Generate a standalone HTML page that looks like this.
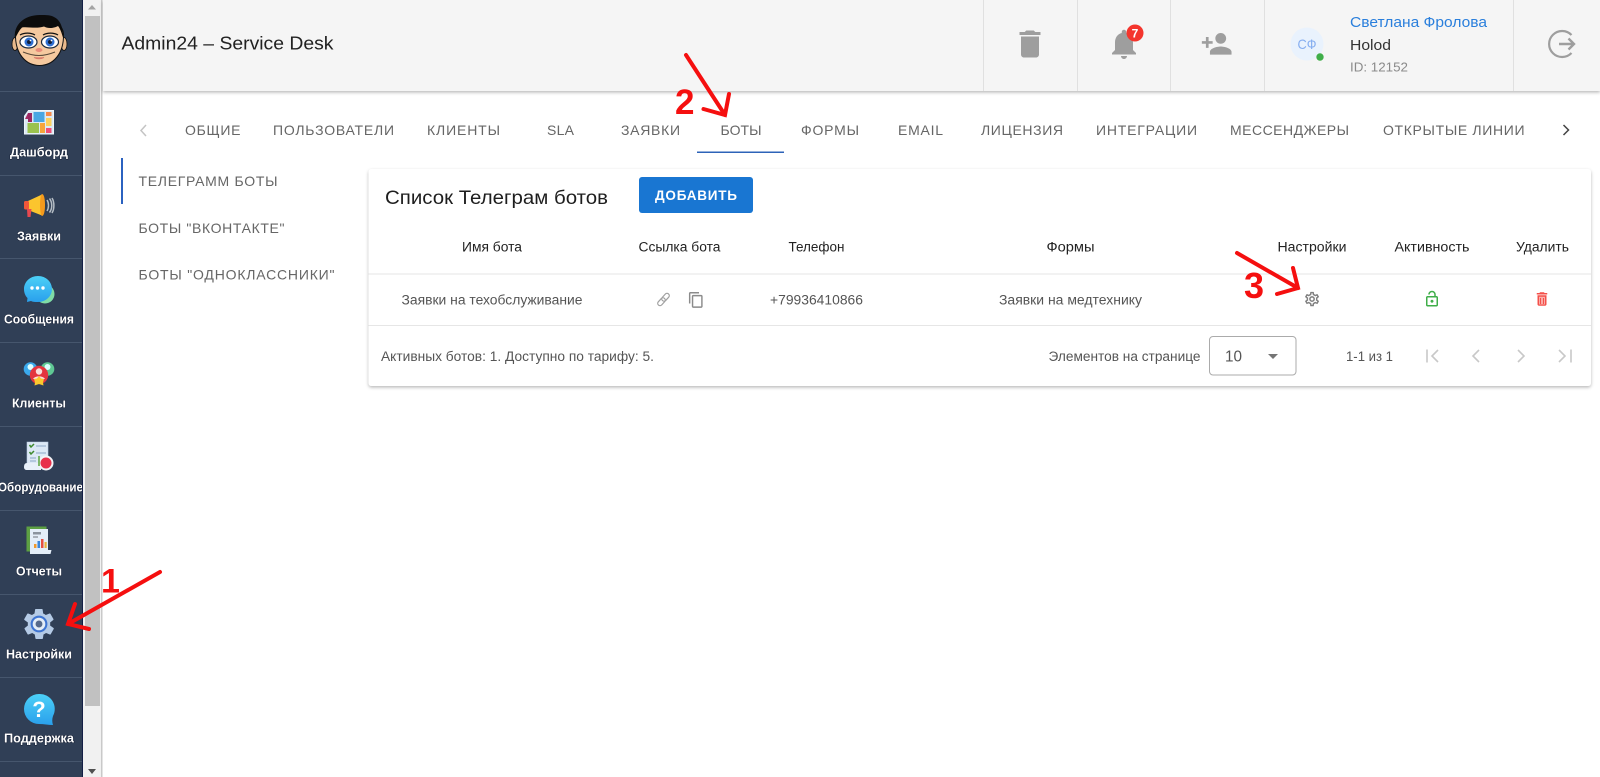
<!DOCTYPE html>
<html lang="ru"><head><meta charset="utf-8"><title>Admin24 – Service Desk</title>
<style>
html,body{margin:0;padding:0;width:1600px;height:777px;overflow:hidden;background:#fff}
svg{display:block}
text{font-family:"Liberation Sans",sans-serif}
.tab{font-size:14px;fill:#666}
.th{font-size:13.5px;fill:#222}
.td{font-size:13.5px;fill:#555}
.nav{font-size:13px;font-weight:bold;fill:#fff;paint-order:stroke;stroke:#141e33;stroke-width:1px}
.thin{fill:none;stroke:#c8c8c8;stroke-width:1.6}
.red{fill:none;stroke:#f50f0f;stroke-width:4;stroke-linecap:round;stroke-linejoin:miter}
.num{font-weight:bold;fill:#f50f0f}
</style></head><body>
<svg width="1600" height="777" viewBox="0 0 1600 777" xmlns="http://www.w3.org/2000/svg">
<defs>
<filter id="sh" x="-2%" y="-10%" width="104%" height="120%"><feDropShadow dx="0" dy="1.5" stdDeviation="1.6" flood-color="#000" flood-opacity=".28"/></filter>
<linearGradient id="bl" x1="0" y1="0" x2="0" y2="1"><stop offset="0" stop-color="#4cd0f7"/><stop offset="1" stop-color="#2aa0ec"/></linearGradient>
</defs>
<rect width="1600" height="777" fill="#fff"/>

<!-- sidebar -->
<rect x="0" y="0" width="82" height="777" fill="#303f56"/>
<rect x="82" y="0" width="1" height="777" fill="#141f45"/>
<g fill="#46566d">
<rect y="91" width="82" height="1"/><rect y="175" width="82" height="1"/><rect y="258" width="82" height="1"/><rect y="342" width="82" height="1"/>
<rect y="426" width="82" height="1"/><rect y="510" width="82" height="1"/><rect y="594" width="82" height="1"/><rect y="677" width="82" height="1"/><rect y="761" width="82" height="1"/>
</g>
<!-- scrollbar -->
<rect x="83" y="0" width="18" height="777" fill="#f1f1f1"/>
<rect x="85" y="16" width="15" height="690" fill="#c1c1c1"/>
<path d="M88 9.500l4-4.500 4 4.500z" fill="#a3a3a3"/>
<path d="M88 769l4 5 4-5z" fill="#505050"/>
<rect x="101" y="0" width="1.500" height="777" fill="#c9c9c9"/>

<!-- avatar -->
<g>
<ellipse cx="15" cy="44" rx="3" ry="6.500" fill="#e9b98c" stroke="#111" stroke-width=".8"/>
<ellipse cx="64" cy="44" rx="3" ry="6.500" fill="#e9b98c" stroke="#111" stroke-width=".8"/>
<path d="M15.500 34C15 54 26 65.500 39.500 65.500S64 54 63.500 34C63 24 52 19 39.500 19S16 24 15.500 34z" fill="#f5c99f" stroke="#111" stroke-width="1"/>
<path d="M15 39C13 25 24 15 40 15c6 0 11 0 14 2 6 3 9 9 9.500 22-2-6-3-10-5.500-13-3 2-10 3-14 .5-7 2.500-17 0-22 1-3 3-5 7-7 11.500z" fill="#0c0c0c"/>
<ellipse cx="28.500" cy="42" rx="8.500" ry="6" fill="#fff" stroke="#1b2a3e" stroke-width="1.200"/>
<ellipse cx="50" cy="42" rx="8.500" ry="6" fill="#fff" stroke="#1b2a3e" stroke-width="1.200"/>
<circle cx="29" cy="42" r="4.500" fill="#2f6fd2"/><circle cx="50" cy="42" r="4.500" fill="#2f6fd2"/>
<circle cx="29" cy="42" r="2" fill="#10203d"/><circle cx="50" cy="42" r="2" fill="#10203d"/>
<circle cx="30.500" cy="40.500" r=".9" fill="#fff"/><circle cx="51.500" cy="40.500" r=".9" fill="#fff"/>
<path d="M20 35c4-2.500 11-2.500 15 0M43 35c4-2.500 11-2.500 15 0" stroke="#111" stroke-width="1.300" fill="none"/>
<ellipse cx="39" cy="50" rx="3.500" ry="2" fill="#e98c7a"/>
<path d="M23 52c5 2 11 3.500 16 3.500s11-1.500 16-3.500" stroke="#5a4a3a" stroke-width="1" fill="none"/>
<path d="M34 57.500c3 1.800 7 1.800 10 0-3 .3-7 .3-10 0z" fill="#d97b6b" stroke="#d97b6b" stroke-width=".8"/>
</g>

<!-- dashboard icon -->
<g>
<path d="M24.500 116l4-5.500h25v23.500h-29z" fill="#dbe9f4" stroke="#eef5fb" stroke-width="1"/>
<path d="M28 113v6h-3z" fill="#a32c64"/><rect x="28" y="113" width="4" height="9" fill="#9b2660"/>
<rect x="33.500" y="112" width="11" height="10" fill="#49a6e3"/><rect x="46" y="112" width="5.500" height="4" fill="#f6894a"/>
<rect x="46" y="118" width="5.500" height="8" fill="#fbd15e"/><rect x="27.500" y="123" width="11.500" height="10" fill="#9bc24e"/>
<rect x="40" y="123" width="5" height="10" fill="#f6a53c"/><rect x="46" y="128" width="5.500" height="5" fill="#f04f77"/>
</g>
<!-- megaphone -->
<g>
<path d="M28 201l14-6.500v21L28 210z" fill="#fbc52e"/><path d="M42 194c2 0 3 5 3 11s-1 11-3 11c-1 0-2-5-2-11s1-11 2-11z" fill="#f59a1d"/>
<rect x="24" y="201" width="5" height="8.500" rx="1.500" fill="#f0573a"/>
<path d="M27 209h4.500l-1 8h-3z" fill="#e8484f"/>
<path d="M47 200c2 3 2 8 0 11M49.500 198.500c3 4 3 10 0 14M52 198c2.500 4 2.500 11 0 15" stroke="#b4bcc4" stroke-width="1.500" fill="none"/>
</g>
<!-- chat -->
<g>
<circle cx="45" cy="294" r="9.500" fill="#7fdca6"/>
<path d="M38 276c8 0 14 6 14 13s-6 13-14 13c-3 0-5 0-7-1l-4 1 .5-4c-2-2-3.500-5-3.500-9 0-7 6-13 14-13z" fill="url(#bl)"/>
<circle cx="32" cy="288" r="1.700" fill="#fff"/><circle cx="37.500" cy="288" r="1.700" fill="#fff"/><circle cx="43" cy="288" r="1.700" fill="#fff"/>
</g>
<!-- clients -->
<g>
<circle cx="30.500" cy="369" r="6.800" fill="#3aa9ec"/><circle cx="47.500" cy="369" r="6.800" fill="#5fc894"/>
<circle cx="30.500" cy="367" r="3" fill="#dff"/><circle cx="47.500" cy="367" r="3" fill="#dff"/>
<circle cx="39" cy="375" r="9.200" fill="#e3353f"/><circle cx="39" cy="371.500" r="3.200" fill="#f9dede"/>
<path d="M33 379c2-3.500 10-3.500 12 0" fill="#f9dede"/>
<path d="M39 376l2 2.500 3 .5-1 3.500 .5 3-4.500-1.500-4.500 1.500 .5-3-1-3.500 3-.5z" fill="#fbc92e"/>
</g>
<!-- equipment -->
<g>
<path d="M27 442h21v25H27z" fill="#dde9f6" stroke="#b7cbe2" stroke-width=".6"/>
<path d="M24 467c0-2.500 1-4 3-4h14v7H27c-2 0-3-1-3-3z" fill="#e9f1fa"/>
<path d="M29.500 445l1.500 2 3-3M29.500 452l1.500 2 3-3" stroke="#3f8a2f" stroke-width="1.500" fill="none"/>
<path d="M36 446h10M36 453h10M30 458h6M30 461h6" stroke="#8aa7c6" stroke-width="1"/>
<circle cx="46" cy="463" r="7.500" fill="#f2f3f6"/><circle cx="46" cy="463" r="5.500" fill="#e8304a"/>
<path d="M39 456v10" stroke="#5ca53e" stroke-width="1.500"/>
</g>
<!-- reports -->
<g>
<rect x="26.500" y="526.500" width="20" height="25" fill="#5da043"/>
<path d="M30 529h18v21h3.500l-1 4H30z" fill="#e4eef8"/>
<rect x="33" y="532" width="8" height="2.500" fill="#8b949e"/><rect x="33" y="536" width="5" height="2" fill="#a9b1ba"/>
<rect x="34" y="544" width="2.500" height="4" fill="#f39a2b"/><rect x="37.500" y="541" width="2.500" height="7" fill="#3d87d8"/><rect x="41" y="539" width="2.500" height="9" fill="#e65040"/><rect x="44.500" y="542" width="2.200" height="6" fill="#e8b23a"/>
</g>
<!-- settings -->
<g transform="translate(21,606) scale(1.500)">
<path d="M19.400 13a7.500 7.500 0 0 0 0-2l2.100-1.700c.2-.1.2-.4.1-.6l-2-3.500c-.1-.2-.4-.3-.6-.2l-2.500 1a7.300 7.300 0 0 0-1.700-1l-.4-2.600c0-.2-.2-.4-.5-.4h-4c-.2 0-.5.200-.5.400l-.4 2.600c-.6.300-1.100.600-1.700 1l-2.500-1c-.2-.1-.5 0-.6.200l-2 3.500c-.1.200-.1.500.1.600L4.600 11a7.500 7.500 0 0 0 0 2l-2.100 1.700c-.2.100-.2.400-.1.600l2 3.500c.1.200.4.300.6.200l2.500-1c.5.400 1.100.700 1.700 1l.4 2.600c0 .2.300.4.500.4h4c.3 0 .5-.2.500-.4l.4-2.600c.6-.3 1.200-.6 1.700-1l2.500 1c.2.100.5 0 .6-.2l2-3.500c.1-.2.100-.5-.1-.6z" fill="#b5cbe6"/>
<circle cx="12" cy="12" r="5.600" fill="#3f75d2"/><circle cx="12" cy="12" r="4.200" fill="#e3ecf6"/><circle cx="12" cy="12" r="2.300" fill="#56698a"/>
</g>
<!-- help -->
<path d="M39 694a15 15 0 1 0 0 30c5 0 9 1 14 1-1-3-1-6 0-9a15 15 0 0 0-14-22z" fill="url(#bl)"/>
<text x="39" y="717" text-anchor="middle" font-size="22" font-weight="bold" fill="#fff">?</text>

<text class="nav" x="10" y="156.500" textLength="58" lengthAdjust="spacingAndGlyphs">Дашборд</text>
<text class="nav" x="17" y="240.500" textLength="44" lengthAdjust="spacingAndGlyphs">Заявки</text>
<text class="nav" x="4" y="323.500" textLength="70" lengthAdjust="spacingAndGlyphs">Сообщения</text>
<text class="nav" x="12" y="407.500" textLength="54" lengthAdjust="spacingAndGlyphs">Клиенты</text>
<svg x="0" y="470" width="82" height="30"><text class="nav" x="-2" y="21.500" textLength="85" lengthAdjust="spacingAndGlyphs">Оборудование</text></svg>
<text class="nav" x="16" y="575.500" textLength="46" lengthAdjust="spacingAndGlyphs">Отчеты</text>
<text class="nav" x="6" y="658.500" textLength="66" lengthAdjust="spacingAndGlyphs">Настройки</text>
<text class="nav" x="4" y="742.500" textLength="70" lengthAdjust="spacingAndGlyphs">Поддержка</text>

<!-- header -->
<rect x="103" y="0" width="1497" height="91" fill="#f5f5f5" filter="url(#sh)"/>
<g fill="#e0e0e0"><rect x="983" y="0" width="1" height="91"/><rect x="1077" y="0" width="1" height="91"/><rect x="1170" y="0" width="1" height="91"/><rect x="1264" y="0" width="1" height="91"/><rect x="1513" y="0" width="1" height="91"/></g>
<text x="121.500" y="49.500" font-size="18" fill="#222" textLength="212" lengthAdjust="spacingAndGlyphs">Admin24 – Service Desk</text>
<path transform="translate(1012,26) scale(1.500)" d="M6 19c0 1.100.9 2 2 2h8c1.100 0 2-.9 2-2V7H6v12zM19 4h-3.500l-1-1h-5l-1 1H5v2h14V4z" fill="#9e9e9e"/>
<path transform="translate(1106,26) scale(1.500)" d="M12 22c1.100 0 2-.9 2-2h-4c0 1.100.89 2 2 2zm6-6v-5c0-3.070-1.640-5.640-4.500-6.320V4c0-.83-.67-1.500-1.500-1.500s-1.500.67-1.500 1.500v.68C7.630 5.360 6 7.920 6 11v5l-2 2v1h16v-1l-2-2z" fill="#9e9e9e"/>
<circle cx="1135" cy="33" r="8.500" fill="#f4352d"/>
<text x="1135" y="37.500" font-size="12" font-weight="bold" fill="#fff" text-anchor="middle">7</text>
<path transform="translate(1200.500,27.600) scale(1.350)" d="M15 12c2.210 0 4-1.790 4-4s-1.790-4-4-4-4 1.790-4 4 1.790 4 4 4zm-9-2V7H4v3H1v2h3v3h2v-3h3v-2H6zm9 4c-2.670 0-8 1.340-8 4v2h16v-2c0-2.660-5.330-4-8-4z" fill="#9e9e9e"/>
<circle cx="1307" cy="44" r="16.500" fill="#e9f2fd"/>
<text x="1307" y="49" font-size="14" fill="#86aef0" text-anchor="middle" textLength="19" lengthAdjust="spacingAndGlyphs">СФ</text>
<circle cx="1320" cy="57" r="3.700" fill="#3fae49"/>
<text x="1350" y="27" font-size="14.500" fill="#2a7fdc" textLength="137" lengthAdjust="spacingAndGlyphs">Светлана Фролова</text>
<text x="1350" y="50" font-size="14.500" fill="#333" textLength="41" lengthAdjust="spacingAndGlyphs">Holod</text>
<text x="1350" y="71.500" font-size="12.500" fill="#8a8a8a" textLength="58" lengthAdjust="spacingAndGlyphs">ID: 12152</text>
<path d="M1571.500 35a13 13 0 1 0 0 18" fill="none" stroke="#9e9e9e" stroke-width="2.200"/>
<path d="M1559 44h15M1568.500 38.500l5.500 5.500-5.500 5.500" fill="none" stroke="#9e9e9e" stroke-width="2.400"/>

<!-- tabs -->
<path d="M146 125l-5 5.500 5 5.500" fill="none" stroke="#c4c4c4" stroke-width="1.500"/>
<text class="tab" x="185" y="135" textLength="55.500">ОБЩИЕ</text>
<text class="tab" x="273" y="135" textLength="121">ПОЛЬЗОВАТЕЛИ</text>
<text class="tab" x="427" y="135" textLength="73">КЛИЕНТЫ</text>
<text class="tab" x="547" y="135" textLength="27">SLA</text>
<text class="tab" x="621" y="135" textLength="59">ЗАЯВКИ</text>
<text class="tab" x="720.500" y="135" textLength="41">БОТЫ</text>
<text class="tab" x="801" y="135" textLength="58">ФОРМЫ</text>
<text class="tab" x="898" y="135" textLength="45">EMAIL</text>
<text class="tab" x="981" y="135" textLength="82">ЛИЦЕНЗИЯ</text>
<text class="tab" x="1096" y="135" textLength="101">ИНТЕГРАЦИИ</text>
<text class="tab" x="1230" y="135" textLength="119">МЕССЕНДЖЕРЫ</text>
<text class="tab" x="1383" y="135" textLength="141.500">ОТКРЫТЫЕ ЛИНИИ</text>
<path d="M1563.500 125l5 5-5 5" fill="none" stroke="#444" stroke-width="1.500"/>
<rect x="697" y="151.500" width="87" height="1.500" fill="#2d63b8"/>

<!-- left menu -->
<rect x="121" y="158" width="2" height="46" fill="#2b62c0"/>
<text class="tab" x="138.500" y="186" textLength="139">ТЕЛЕГРАММ БОТЫ</text>
<text class="tab" x="138.500" y="233" textLength="146">БОТЫ "ВКОНТАКТЕ"</text>
<text class="tab" x="138.500" y="279.500" textLength="196">БОТЫ "ОДНОКЛАССНИКИ"</text>

<!-- card -->
<rect x="368.500" y="169" width="1222.500" height="217" rx="3" fill="#fff" filter="url(#sh)"/>
<text x="385" y="204" font-size="19.500" fill="#1e1e1e" textLength="223" lengthAdjust="spacingAndGlyphs">Список Телеграм ботов</text>
<rect x="639" y="177" width="114" height="36" rx="3" fill="#1976d2"/>
<text x="696" y="200" font-size="13.500" font-weight="bold" fill="#fff" text-anchor="middle" textLength="82">ДОБАВИТЬ</text>

<g text-anchor="middle">
<text class="th" x="492" y="251.500" textLength="60" lengthAdjust="spacingAndGlyphs">Имя бота</text>
<text class="th" x="679.500" y="251.500" textLength="82" lengthAdjust="spacingAndGlyphs">Ссылка бота</text>
<text class="th" x="816.500" y="251.500" textLength="56" lengthAdjust="spacingAndGlyphs">Телефон</text>
<text class="th" x="1070.500" y="251.500" textLength="48" lengthAdjust="spacingAndGlyphs">Формы</text>
<text class="th" x="1312" y="251.500" textLength="69" lengthAdjust="spacingAndGlyphs">Настройки</text>
<text class="th" x="1432" y="251.500" textLength="75" lengthAdjust="spacingAndGlyphs">Активность</text>
<text class="th" x="1542.500" y="251.500" textLength="53" lengthAdjust="spacingAndGlyphs">Удалить</text>
<text class="td" x="492" y="304.500" textLength="181" lengthAdjust="spacingAndGlyphs">Заявки на техобслуживание</text>
<text class="td" x="816.500" y="304.500" textLength="93" lengthAdjust="spacingAndGlyphs">+79936410866</text>
<text class="td" x="1070.500" y="304.500" textLength="143" lengthAdjust="spacingAndGlyphs">Заявки на медтехнику</text>
</g>
<rect x="368.500" y="273.500" width="1222.500" height="1" fill="#e6e6e6"/>
<rect x="368.500" y="325" width="1222.500" height="1" fill="#e6e6e6"/>

<!-- row icons -->
<g fill="none" stroke="#a0a0a0" stroke-width="1.200" transform="rotate(-48 663.500 299.500)">
<rect x="656" y="297.200" width="9" height="4.600" rx="2.300"/>
<rect x="662" y="297.200" width="9" height="4.600" rx="2.300"/>
</g>
<path transform="translate(687.500,291.300) scale(.72)" d="M16 1H4c-1.100 0-2 .9-2 2v14h2V3h12V1zm3 4H8c-1.100 0-2 .9-2 2v14c0 1.100.9 2 2 2h11c1.100 0 2-.9 2-2V7c0-1.100-.9-2-2-2zm0 16H8V7h11v14z" fill="#8b8b8b"/>
<path transform="translate(1303.400,290.400) scale(.72)" d="M19.430 12.980c.04-.32.07-.64.07-.98 0-.34-.03-.66-.07-.98l2.110-1.650c.19-.15.24-.42.12-.64l-2-3.460c-.09-.16-.26-.25-.44-.25-.06 0-.12.01-.17.03l-2.490 1c-.52-.4-1.080-.73-1.690-.98l-.38-2.650C14.460 2.180 14.250 2 14 2h-4c-.25 0-.46.18-.49.42l-.38 2.650c-.61.25-1.170.59-1.690.98l-2.490-1c-.06-.02-.12-.03-.18-.03-.17 0-.34.09-.43.25l-2 3.460c-.13.22-.07.49.12.64l2.110 1.650c-.04.32-.07.65-.07.98 0 .33.03.66.07.98l-2.110 1.650c-.19.15-.24.42-.12.64l2 3.460c.09.16.26.25.44.25.06 0 .12-.01.17-.03l2.490-1c.52.4 1.080.73 1.690.98l.38 2.650c.03.24.24.42.49.42h4c.25 0 .46-.18.49-.42l.38-2.650c.61-.25 1.170-.59 1.690-.98l2.490 1c.06.02.12.03.18.03.17 0 .34-.09.43-.25l2-3.460c.12-.22.07-.49-.12-.64l-2.110-1.650zm-1.980-1.710c.04.31.05.52.05.73 0 .21-.02.43-.05.73l-.14 1.130.89.7 1.080.84-.7 1.210-1.270-.51-1.040-.42-.9.68c-.43.32-.84.56-1.250.73l-1.060.43-.16 1.130-.2 1.350h-1.400l-.19-1.350-.16-1.130-1.060-.43c-.43-.18-.83-.41-1.230-.71l-.91-.7-1.060.43-1.270.51-.7-1.210 1.080-.84.89-.7-.14-1.130c-.03-.31-.05-.54-.05-.74s.02-.43.05-.73l.14-1.130-.89-.7-1.080-.84.7-1.210 1.270.51 1.040.42.9-.68c.43-.32.84-.56 1.250-.73l1.060-.43.16-1.130.2-1.350h1.390l.19 1.350.16 1.130 1.060.43c.43.18.83.41 1.230.71l.91.7 1.060-.43 1.270-.51.7 1.210-1.070.85-.89.7.14 1.130zM12 8c-2.210 0-4 1.790-4 4s1.790 4 4 4 4-1.790 4-4-1.790-4-4-4zm0 6c-1.100 0-2-.9-2-2s.9-2 2-2 2 .9 2 2-.9 2-2 2z" fill="#808080"/>
<path transform="translate(1423,290) scale(.75)" d="M12 17c1.100 0 2-.9 2-2s-.9-2-2-2-2 .9-2 2 .9 2 2 2zm6-9h-1V6c0-2.760-2.240-5-5-5S7 3.240 7 6h2c0-1.660 1.340-3 3-3s3 1.340 3 3v2H6c-1.100 0-2 .9-2 2v10c0 1.100.9 2 2 2h12c1.100 0 2-.9 2-2V10c0-1.100-.9-2-2-2zm0 12H6V10h12v10z" fill="#3fae49"/>
<rect x="1539" y="296" width="6" height="8" fill="#fbb0ac"/>
<path transform="translate(1533,290) scale(.75)" d="M6 19c0 1.100.9 2 2 2h8c1.100 0 2-.9 2-2V7H6v12zM8 9h8v10H8V9zm7.500-5l-1-1h-5l-1 1H5v2h14V4z" fill="#f4504a"/>
<path d="M1540.500 298v6M1543.500 298v6" stroke="#f4504a" stroke-width="1.100"/>

<!-- footer -->
<text class="td" x="381" y="361" textLength="273" lengthAdjust="spacingAndGlyphs">Активных ботов: 1. Доступно по тарифу: 5.</text>
<text class="td" x="1048.500" y="361" textLength="152" lengthAdjust="spacingAndGlyphs">Элементов на странице</text>
<rect x="1209.500" y="336.500" width="86.500" height="38.500" rx="3.500" fill="#fff" stroke="#ababab"/>
<text x="1225" y="361.500" font-size="16" fill="#555" textLength="17" lengthAdjust="spacingAndGlyphs">10</text>
<path d="M1268 354l5 5 5-5z" fill="#757575"/>
<text class="td" x="1346" y="361" textLength="47" lengthAdjust="spacingAndGlyphs">1-1 из 1</text>
<path class="thin" d="M1427 349.500v13M1438 350l-6 6 6 6M1479 350l-6 6 6 6M1518 350l6 6-6 6M1559 350l6 6-6 6M1571 349.500v13"/>

<!-- annotations -->
<g class="red">
<path d="M160 572L68 624M75 604L68 624L89 629"/>
<path d="M686 55L725 115M703.500 109L725 115L729 94"/>
<path d="M1237 253L1298 288M1293 268L1298 288L1277 294"/>
</g>
<text class="num" x="101" y="592.500" style="font-size:34px">1</text>
<text class="num" x="675" y="114" style="font-size:35px">2</text>
<text class="num" x="1244" y="298" style="font-size:36px">3</text>
</svg>
</body></html>
